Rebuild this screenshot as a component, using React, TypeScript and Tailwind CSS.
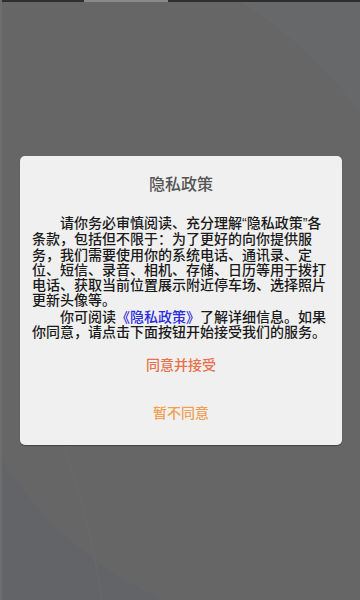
import React from 'react'

const font = { fontFamily: '"Noto Sans CJK SC", "Noto Sans", sans-serif' }

const Q = ({ children }: { children: React.ReactNode }) => (
    <span className="font-['Liberation_Sans']">{children}</span>
)

const App = () => {
    return (
        <div className="relative h-[600px] w-[360px] overflow-hidden bg-[#666666] border-l-2 border-[#6d6d6d]" style={font}>
            {/* faint wallpaper shapes behind the dim layer */}
            <svg className="absolute inset-0" width="360" height="600" viewBox="0 0 360 600">
                <path d="M235 0 L360 0 L360 115 C330 75 285 30 235 0 Z" fill="#68696b" opacity="0.5" />
                <path d="M0 460 C40 520 80 560 160 600 L0 600 Z" fill="#636469" opacity="0.7" />
                <path d="M62 445 C80 500 95 560 100 600" stroke="#6a6a6a" strokeWidth="1" fill="none" />
            </svg>

            <div className="relative flex h-[2px] w-full">
                <div className="w-[82px] bg-[#2e2e2e]" />
                <div className="w-[84px] bg-[#8a8a8a]" />
                <div className="flex-1 bg-[#2e2e2e]" />
            </div>

            <div className="relative mx-[18px] mt-[154px] flex h-[289px] flex-col rounded-[5px] bg-[#f0f0f0] px-[12px] pt-[16px] shadow-[0_1px_1px_rgba(0,0,0,0.35)]">
                <h1 className="text-center text-[16px] font-medium leading-[22px] text-[#555555]">隐私政策</h1>

                <div className="mt-[21px] text-[14px] font-medium leading-[15.3px] text-[#1a1a1a]">
                    <p className="indent-[28px]">
                        请你务必审慎阅读、充分理解<Q>“</Q>隐私政策<Q>”</Q>各条款，包括但不限于：为了更好的向你提供服务，我们需要使用你的系统电话、通讯录、定位、短信、录音、相机、存储、日历等用于拨打电话、获取当前位置展示附近停车场、选择照片更新头像等。
                    </p>
                    <p className="mt-[1px] indent-[28px]">
                        你可阅读<span className="text-[#2b2be0]">《隐私政策》</span>了解详细信息。如果你同意，请点击下面按钮开始接受我们的服务。
                    </p>
                </div>

                <button type="button" className="mt-[1px] h-[48px] text-center text-[14px] font-medium text-[#e8704a]">同意并接受</button>
                <button type="button" className="h-[48px] text-center text-[14px] font-medium text-[#f0a050]">暂不同意</button>
            </div>
        </div>
    )
}

export default App
